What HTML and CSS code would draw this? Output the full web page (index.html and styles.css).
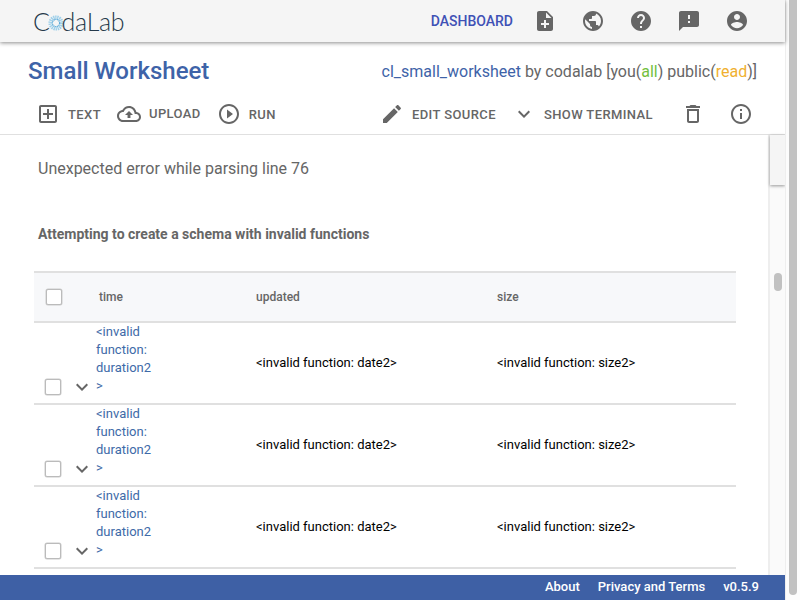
FILE: index.html
```html
<!DOCTYPE html>
<html lang="en">
<head>
    <meta charset="UTF-8">
    <title>Small Worksheet</title>
    <link rel="stylesheet" href="styles.css">
</head>
<body>
    <div class="app">
        <div class="page">
            <header class="navbar">
                <div class="logo">C<svg class="logo-ring" viewBox="0 0 20 20"><circle cx="10" cy="10" r="7" fill="none" stroke="#9fd0ea" stroke-width="5" stroke-dasharray="1.6 0.8"/><circle cx="10" cy="10" r="4.5" fill="none" stroke="#5aaad8" stroke-width="1.5" stroke-dasharray="1.4 0.8"/></svg>daLab</div>
                <nav class="nav-links">
                    <a class="nav-text">DASHBOARD</a>
                    <svg class="icon" viewBox="0 0 24 24"><path d="M14 2H6c-1.1 0-1.99.9-1.99 2L4 20c0 1.1.89 2 1.99 2H18c1.1 0 2-.9 2-2V8l-6-6zm2 14h-3v3h-2v-3H8v-2h3v-3h2v3h3v2zm-3-7V3.5L18.5 9H13z"/></svg>
                    <svg class="icon" viewBox="0 0 24 24"><path d="M12 2C6.48 2 2 6.48 2 12s4.48 10 10 10 10-4.48 10-10S17.52 2 12 2zm-1 17.93c-3.95-.49-7-3.85-7-7.93 0-.62.08-1.21.21-1.79L9 15v1c0 1.1.9 2 2 2v1.93zm6.9-2.54c-.26-.81-1-1.39-1.9-1.39h-1v-3c0-.55-.45-1-1-1H8v-2h2c.55 0 1-.45 1-1V7h2c1.1 0 2-.9 2-2v-.41c2.93 1.19 5 4.06 5 7.41 0 2.08-.8 3.97-2.1 5.39z"/></svg>
                    <svg class="icon" viewBox="0 0 24 24"><path d="M12 2C6.48 2 2 6.48 2 12s4.48 10 10 10 10-4.48 10-10S17.52 2 12 2zm1 17h-2v-2h2v2zm2.07-7.75l-.9.92C13.45 12.9 13 13.5 13 15h-2v-.5c0-1.1.45-2.1 1.17-2.83l1.24-1.26c.37-.36.59-.86.59-1.41 0-1.1-.9-2-2-2s-2 .9-2 2H8c0-2.21 1.79-4 4-4s4 1.79 4 4c0 .88-.36 1.68-.93 2.25z"/></svg>
                    <svg class="icon" viewBox="0 0 24 24"><path d="M20 2H4c-1.1 0-1.99.9-1.99 2L2 22l4-4h14c1.1 0 2-.9 2-2V4c0-1.1-.9-2-2-2zm-7 12h-2v-2h2v2zm0-4h-2V6h2v4z"/></svg>
                    <svg class="icon" viewBox="0 0 24 24"><path d="M12 2C6.48 2 2 6.48 2 12s4.48 10 10 10 10-4.48 10-10S17.52 2 12 2zm0 3c1.66 0 3 1.34 3 3s-1.34 3-3 3-3-1.34-3-3 1.34-3 3-3zm0 14.2c-2.5 0-4.71-1.28-6-3.22.03-1.99 4-3.08 6-3.08 1.99 0 5.97 1.09 6 3.08-1.29 1.94-3.5 3.22-6 3.22z"/></svg>
                </nav>
            </header>

            <div class="title-row">
                <h1>Small Worksheet</h1>
                <div class="ws-info"><span class="ws-name">cl_small_worksheet</span> by codalab [you(<span class="perm-all">all</span>) public(<span class="perm-read">read</span>)]</div>
            </div>

            <div class="toolbar">
                <div class="tool-group">
                    <div class="tool"><svg class="icon" viewBox="0 0 24 24"><path d="M19 3H5c-1.11 0-2 .9-2 2v14c0 1.1.89 2 2 2h14c1.1 0 2-.9 2-2V5c0-1.1-.9-2-2-2zm0 16H5V5h14v14zm-8-2h2v-4h4v-2h-4V7h-2v4H7v2h4z"/></svg>TEXT</div>
                    <div class="tool tool-upload"><svg class="icon" viewBox="0 0 24 24"><path d="M19.35 10.04C18.67 6.59 15.64 4 12 4 9.11 4 6.6 5.64 5.35 8.04 2.34 8.36 0 10.91 0 14c0 3.31 2.69 6 6 6h13c2.76 0 5-2.24 5-5 0-2.64-2.05-4.78-4.65-4.96zM19 18H6c-2.21 0-4-1.79-4-4 0-2.05 1.53-3.76 3.56-3.97l1.07-.11.5-.95C8.08 7.14 9.94 6 12 6c2.62 0 4.88 1.86 5.39 4.43l.3 1.5 1.53.11c1.56.1 2.78 1.41 2.78 2.96 0 1.65-1.35 3-3 3zM8 13h2.55v3h2.9v-3H16l-4-4z"/></svg><span>UPLOAD</span></div>
                    <div class="tool"><svg class="icon" viewBox="0 0 24 24"><path d="M10 16.5l6-4.5-6-4.5v9zM12 2C6.48 2 2 6.48 2 12s4.48 10 10 10 10-4.48 10-10S17.52 2 12 2zm0 18c-4.41 0-8-3.59-8-8s3.59-8 8-8 8 3.59 8 8-3.59 8-8 8z"/></svg>RUN</div>
                </div>
                <div class="tool-group">
                    <div class="tool"><svg class="icon" viewBox="0 0 24 24"><path d="M3 17.25V21h3.75L17.81 9.94l-3.75-3.75L3 17.25zM20.71 7.04c.39-.39.39-1.02 0-1.41l-2.34-2.34c-.39-.39-1.02-.39-1.41 0l-1.83 1.83 3.75 3.75 1.83-1.83z"/></svg>EDIT SOURCE</div>
                    <div class="tool"><svg class="icon" viewBox="0 0 24 24"><path d="M16.59 8.59L12 13.17 7.41 8.59 6 10l6 6 6-6z"/></svg>SHOW TERMINAL</div>
                    <svg class="icon icon-trash" viewBox="0 0 24 24"><path d="M6 19c0 1.1.9 2 2 2h8c1.1 0 2-.9 2-2V7H6v12zM8 9h8v10H8V9zm7.5-5l-1-1h-5l-1 1H5v2h14V4z"/></svg>
                    <svg class="icon" viewBox="0 0 24 24"><path d="M11 7h2v2h-2zm0 4h2v6h-2zm1-9C6.48 2 2 6.48 2 12s4.48 10 10 10 10-4.48 10-10S17.52 2 12 2zm0 18c-4.41 0-8-3.59-8-8s3.59-8 8-8 8 3.59 8 8-3.59 8-8 8z"/></svg>
                </div>
            </div>

            <main class="content-row">
                <div class="worksheet">
                    <p class="error-line">Unexpected error while parsing line 76</p>
                    <p class="section-title">Attempting to create a schema with invalid functions</p>
                    <table class="bundles">
                        <thead>
                            <tr>
                                <th class="col-check"><span class="checkbox"></span></th>
                                <th class="col-time">time</th>
                                <th class="col-updated">updated</th>
                                <th>size</th>
                            </tr>
                        </thead>
                        <tbody>
                            <tr>
                                <td class="col-check"><div class="row-controls"><span class="checkbox"></span><svg class="chevron" viewBox="0 0 24 24"><path d="M16.59 8.59L12 13.17 7.41 8.59 6 10l6 6 6-6z"/></svg></div></td>
                                <td class="col-time"><a class="bundle-link">&lt;invalid function: duration2&gt;</a></td>
                                <td class="cell-text">&lt;invalid function: date2&gt;</td>
                                <td class="cell-text">&lt;invalid function: size2&gt;</td>
                            </tr>
                            <tr>
                                <td class="col-check"><div class="row-controls"><span class="checkbox"></span><svg class="chevron" viewBox="0 0 24 24"><path d="M16.59 8.59L12 13.17 7.41 8.59 6 10l6 6 6-6z"/></svg></div></td>
                                <td class="col-time"><a class="bundle-link">&lt;invalid function: duration2&gt;</a></td>
                                <td class="cell-text">&lt;invalid function: date2&gt;</td>
                                <td class="cell-text">&lt;invalid function: size2&gt;</td>
                            </tr>
                            <tr>
                                <td class="col-check"><div class="row-controls"><span class="checkbox"></span><svg class="chevron" viewBox="0 0 24 24"><path d="M16.59 8.59L12 13.17 7.41 8.59 6 10l6 6 6-6z"/></svg></div></td>
                                <td class="col-time"><a class="bundle-link">&lt;invalid function: duration2&gt;</a></td>
                                <td class="cell-text">&lt;invalid function: date2&gt;</td>
                                <td class="cell-text">&lt;invalid function: size2&gt;</td>
                            </tr>
                        </tbody>
                    </table>
                </div>
                <div class="inner-scroll">
                    <div class="inner-scroll-top"></div>
                    <div class="inner-scroll-thumb"></div>
                </div>
            </main>

            <footer class="footer">
                <a>About</a>
                <a>Privacy and Terms</a>
                <span>v0.5.9</span>
            </footer>
        </div>
        <div class="page-scroll"><div class="page-scroll-thumb"></div></div>
    </div>
</body>
</html>
```

FILE: styles.css
```css
html, body {
    margin: 0;
    height: 100%;
    overflow: hidden;
}
body {
    font-family: Roboto, "Liberation Sans", sans-serif;
    color: #666;
    background-color: #fff;
}
.app {
    display: flex;
    height: 600px;
}
.page {
    width: 785px;
    display: flex;
    flex-direction: column;
}
.icon {
    width: 24px;
    height: 24px;
    fill: #666;
    flex: none;
}

/* top bar */
.navbar {
    height: 42px;
    flex: none;
    display: flex;
    align-items: center;
    justify-content: space-between;
    padding: 0 36px 0 33px;
    background-color: #f5f5f5;
    box-shadow: 0 1px 4px rgba(0, 0, 0, 0.45);
    position: relative;
}
.logo {
    display: flex;
    align-items: center;
    font-family: Lato, sans-serif;
    font-weight: 300;
    font-size: 25px;
    letter-spacing: -0.3px;
    color: #25394a;
}
.logo-ring {
    width: 16px;
    height: 16px;
    margin: 3px -2px 0 -2px;
}
.nav-links {
    display: flex;
    align-items: center;
    gap: 24px;
}
.nav-text {
    font-size: 14px;
    font-weight: 500;
    color: #3f51b5;
    margin-right: -4px;
}

/* worksheet title */
.title-row {
    height: 58px;
    flex: none;
    display: flex;
    align-items: center;
    justify-content: space-between;
    padding: 0 28px 0 28px;
}
.title-row h1 {
    margin: 0;
    font-size: 24px;
    font-weight: 500;
    color: #3e63a8;
}
.ws-info {
    font-size: 16px;
    color: #666;
}
.ws-name {
    color: #3e63a8;
}
.perm-all {
    color: #72c03e;
}
.perm-read {
    color: #f0b030;
}

/* toolbar */
.toolbar {
    height: 28px;
    flex: none;
    display: flex;
    align-items: center;
    justify-content: space-between;
    padding: 0 32px 6px 36px;
    border-bottom: 1px solid #e0e0e0;
}
.tool-group {
    display: flex;
    align-items: center;
    gap: 16px;
}
.tool {
    display: flex;
    align-items: center;
    gap: 8px;
    font-size: 13px;
    font-weight: 500;
    letter-spacing: 0.4px;
    color: #666;
}
.tool-upload span {
    margin-top: -2px;
}
.icon-trash {
    margin-left: 12px;
    margin-right: 8px;
}

/* content */
.content-row {
    flex: 1;
    min-height: 0;
    display: flex;
}
.worksheet {
    flex: 1;
    padding: 0 32px 0 34px;
    overflow: hidden;
}
.error-line {
    margin: 24px 0 0 4px;
    font-size: 16px;
    line-height: 20px;
    color: #666;
}
.section-title {
    margin: 46px 0 0 4px;
    font-size: 14px;
    font-weight: 700;
    line-height: 18px;
    color: #666;
}
.bundles {
    width: 702px;
    margin-top: 28px;
    border-collapse: collapse;
    table-layout: fixed;
    font-size: 13px;
    color: #000;
}
.bundles th {
    height: 48px;
    padding: 0;
    text-align: left;
    font-size: 12px;
    font-weight: 500;
    color: #666;
    background-color: #f7f8fa;
    border-top: 2px solid #e0e0e0;
    border-bottom: 2px solid #e0e0e0;
}
.bundles td {
    height: 80px;
    padding: 0;
    border-bottom: 2px solid #e0e0e0;
}
.bundles td.cell-text {
    height: 78px;
    padding-bottom: 2px;
}
.col-check {
    width: 62px;
}
.col-time {
    width: 160px;
}
.bundles .col-time {
    width: 160px;
}
.bundles th.col-time {
    width: 157px;
    padding-left: 3px;
}
.col-updated {
    width: 241px;
}
.bundles th .checkbox {
    display: block;
    margin-left: 12px;
}
.row-controls {
    display: flex;
    align-items: center;
    gap: 6px;
    padding: 47px 0 0 11px;
}
.checkbox {
    width: 14px;
    height: 14px;
    flex: none;
    border: 1px solid #bbb;
    border-radius: 2px;
    box-shadow: 0 0 0 0.5px #ccc;
    background-color: #fff;
}
.chevron {
    width: 24px;
    height: 24px;
    fill: #666;
    margin-left: 3px;
    margin-right: -14px;
}
.bundle-link {
    display: block;
    width: 58px;
    padding-bottom: 8px;
    line-height: 18px;
    color: #3e6aa8;
    word-break: break-word;
}

/* fake scrollbars */
.inner-scroll {
    width: 17px;
    flex: none;
    box-sizing: border-box;
    border-left: 2px solid #eee;
    background-color: #fafafa;
}
.inner-scroll-top {
    height: 50px;
    background-color: #f5f5f5;
    box-shadow: 0 1px 3px rgba(0, 0, 0, 0.4);
}
.inner-scroll-thumb {
    width: 8px;
    height: 18px;
    margin: 88px 0 0 4px;
    border-radius: 4px;
    background-color: #c1c1c1;
}
.footer {
    height: 23px;
    flex: none;
    display: flex;
    align-items: center;
    justify-content: flex-end;
    gap: 18px;
    padding: 0 26px 2px 0;
    background-color: #3e60a5;
    color: #fff;
    font-size: 13px;
    font-weight: 500;
}
.page-scroll {
    flex: 1;
    padding: 0 3px 5px 3px;
    background-color: #fcfcfc;
    border-left: 1px solid #eee;
}
.page-scroll-thumb {
    height: 100%;
    border-radius: 0 0 4px 4px;
    background-color: #c1c1c1;
}
```
